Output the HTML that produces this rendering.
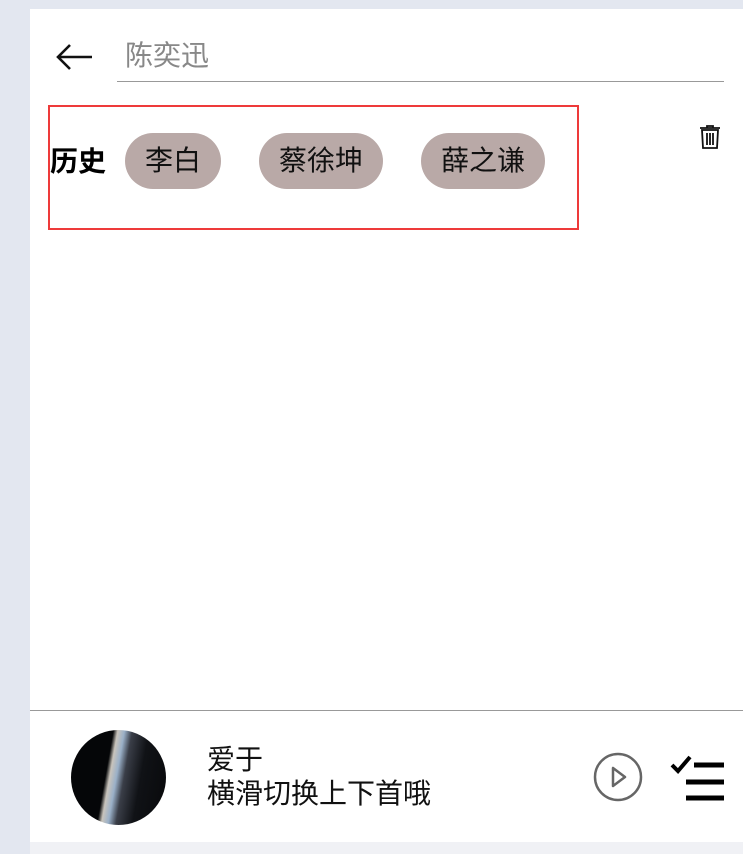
<!DOCTYPE html>
<html><head><meta charset="utf-8"><style>
*{margin:0;padding:0;box-sizing:border-box}
body{width:743px;height:854px;background:#e3e7f0;position:relative;overflow:hidden;font-family:"Liberation Sans","Noto Sans CJK SC",sans-serif}
.panel{position:absolute;left:30px;top:9px;width:713px;height:833px;background:#fff}
.bot{position:absolute;left:30px;top:842px;width:713px;height:12px;background:#f0f1f5}
.a{position:absolute}
.chip{position:absolute;top:133px;height:56px;border-radius:28px;background:#b9a9a7;color:#111;font-size:28px;line-height:56px;text-align:center}
</style></head><body>
<div class="panel"></div>
<div class="bot"></div>
<svg class="a" style="left:54px;top:42px" width="40" height="30" viewBox="0 0 40 30"><path d="M38 15H4M16 3L4 15l12 12" fill="none" stroke="#111" stroke-width="2.6"/></svg>
<div class="a" style="left:125px;top:38px;font-size:28px;color:#888;line-height:36px">陈奕迅</div>
<div class="a" style="left:117px;top:81px;width:607px;height:1px;background:#999"></div>
<div class="a" style="left:48px;top:105px;width:531px;height:125px;border:2px solid #ee3a3a"></div>
<div class="a" style="left:50px;top:145px;font-size:28px;font-weight:bold;line-height:34px">历史</div>
<div class="chip" style="left:125px;width:96px">李白</div>
<div class="chip" style="left:259px;width:124px">蔡徐坤</div>
<div class="chip" style="left:421px;width:124px">薛之谦</div>
<svg class="a" style="left:698px;top:124px" width="26" height="26" viewBox="0 0 26 26"><path d="M2 4h20M9 4V2h6v2M4 6h16l-1 18H5z M9 9v12M12 9v12M15 9v12" fill="none" stroke="#111" stroke-width="1.8"/></svg>
<div class="a" style="left:30px;top:710px;width:713px;height:1px;background:#999"></div>
<div class="a" style="left:71px;top:730px;width:95px;height:95px;border-radius:50%;background:linear-gradient(100deg,#050608 0 38%,#c9c4bc 42%,#9ab0c8 48%,#3a3e48 55%,#101216 70%,#08090b)"></div>
<div class="a" style="left:207px;top:743px;font-size:28px;line-height:34px;color:#111">爱于<br>横滑切换上下首哦</div>
<svg class="a" style="left:593px;top:752px" width="52" height="52" viewBox="0 0 52 52"><circle cx="25" cy="25" r="23" fill="none" stroke="#666" stroke-width="2.5"/><path d="M20 16v18l12-9z" fill="none" stroke="#666" stroke-width="2.5" stroke-linejoin="round"/></svg>
<svg class="a" style="left:670px;top:753px" width="56" height="50" viewBox="0 0 56 50"><path d="M2 12l6 6 12-14" fill="none" stroke="#000" stroke-width="4"/><path d="M24 12h30M16 29h38M16 45h38" stroke="#000" stroke-width="5"/></svg>
</body></html>
